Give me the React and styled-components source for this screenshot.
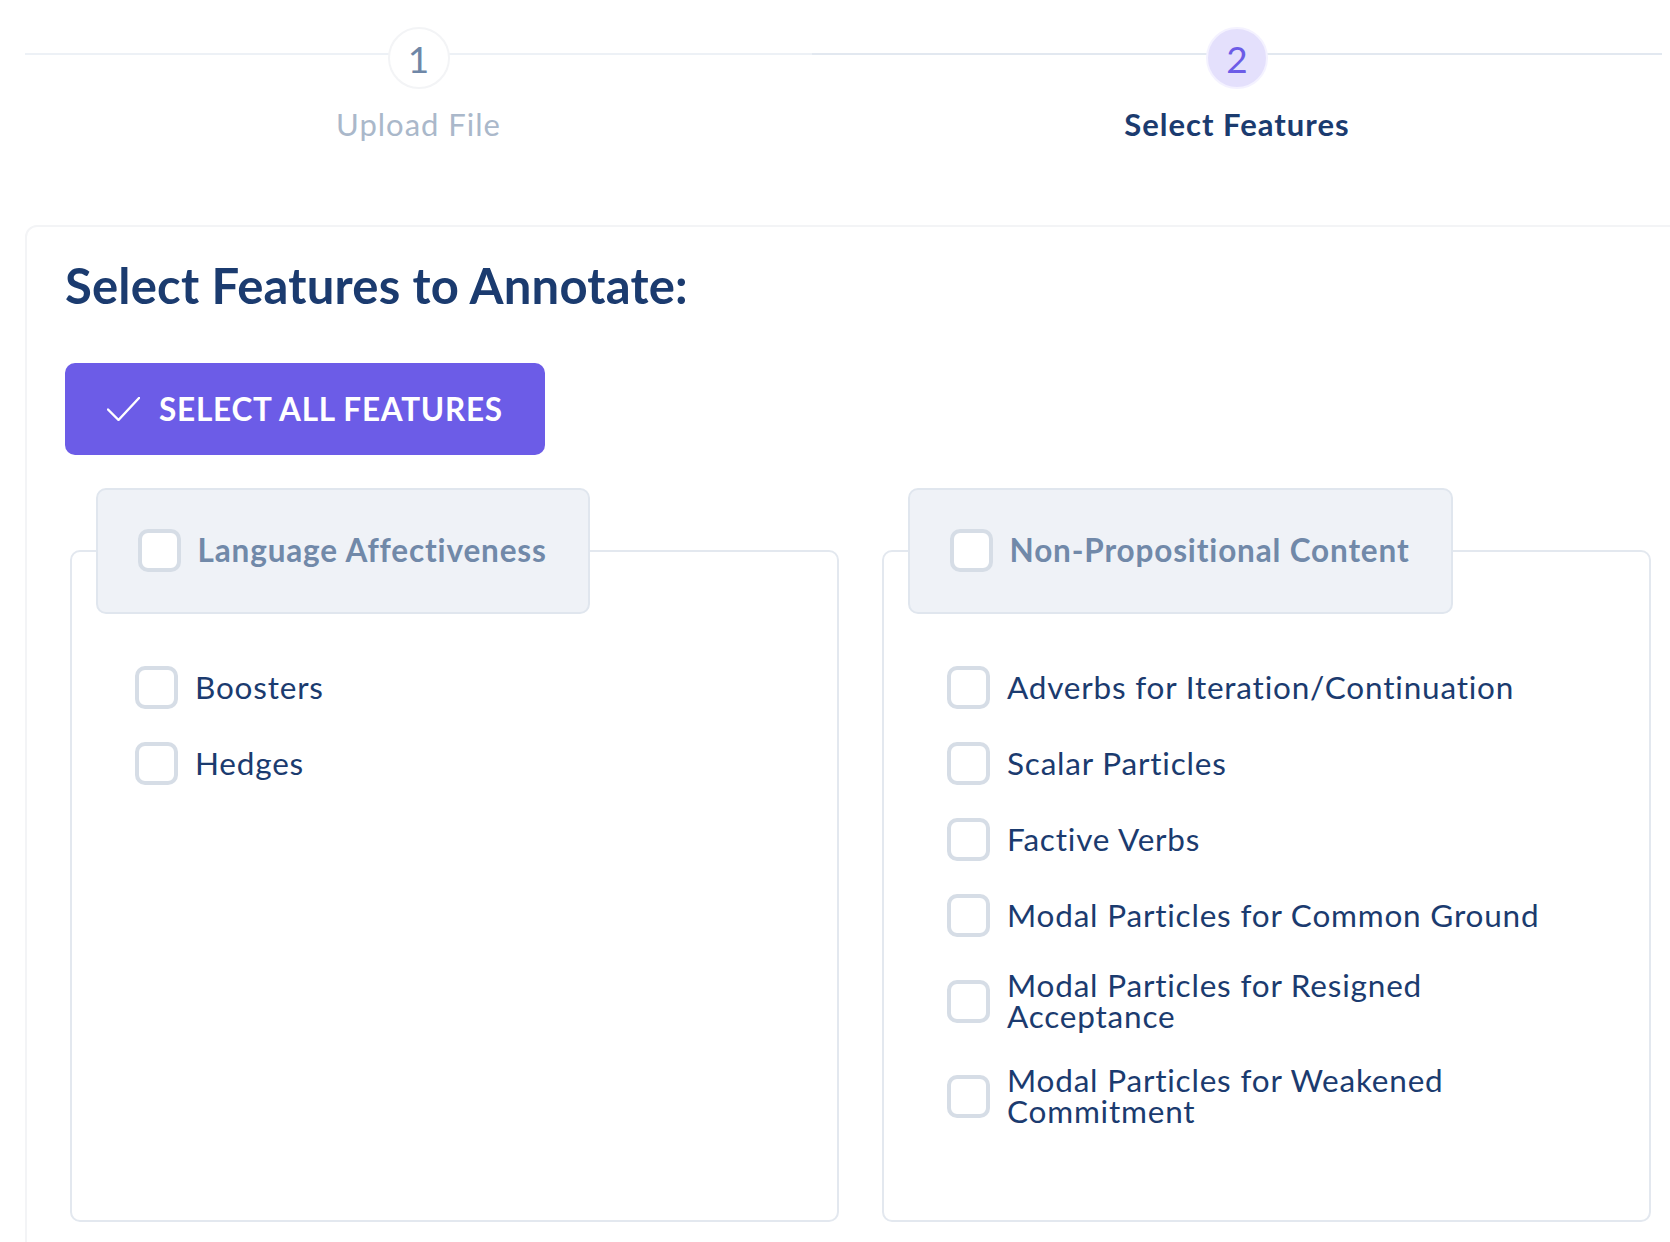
import styled, { createGlobalStyle } from "styled-components";

const GlobalStyle = createGlobalStyle`
  html, body {
    margin: 0;
    padding: 0;
    overflow: hidden;
    background: #ffffff;
  }
  body {
    font-family: Lato, "Noto Sans", sans-serif;
  }
  * {
    box-sizing: border-box;
  }
`;

const Page = styled.div`
  width: 1720px;
  padding-left: 25px;
`;

const Stepper = styled.div`
  display: flex;
`;

const Step = styled.div`
  position: relative;
  flex: 0 0 ${(p) => p.$width}px;
  display: flex;
  flex-direction: column;
  align-items: center;
  padding-top: 27px;

  &::before {
    content: "";
    position: absolute;
    top: 53px;
    left: 0;
    right: 0;
    height: 2px;
    background: ${(p) => p.$line};
  }
`;

const StepCircle = styled.div`
  position: relative;
  z-index: 1;
  width: 62px;
  height: 62px;
  border-radius: 50%;
  display: flex;
  align-items: center;
  justify-content: center;
  font-size: 37px;
  line-height: 1;
  background: ${(p) => (p.$active ? "#e4e0fc" : "#ffffff")};
  border: 2px solid ${(p) => (p.$active ? "#f4f2ff" : "#f3f4f6")};
  color: ${(p) => (p.$active ? "#6c5ce7" : "#6f87a7")};
`;

const StepLabel = styled.div`
  margin-top: 17px;
  font-size: 31px;
  line-height: 1.2;
  letter-spacing: 1px;
  font-weight: ${(p) => (p.$active ? 700 : 400)};
  color: ${(p) => (p.$active ? "#1b3b6f" : "#aab8ca")};
`;

const Card = styled.div`
  margin-top: 82px;
  width: 1671px;
  border: 2px solid #f3f4f6;
  border-radius: 12px;
  padding: 29px 40px 40px 38px;
`;

const Title = styled.h2`
  margin: 0;
  font-size: 49px;
  line-height: 1.2;
  letter-spacing: 0.2px;
  font-weight: 700;
  color: #1b3b6f;
`;

const SelectAllButton = styled.button`
  margin-top: 48px;
  display: flex;
  align-items: center;
  gap: 19px;
  height: 92px;
  padding: 0 42px;
  border: none;
  border-radius: 10px;
  background: #6c5ce7;
  color: #ffffff;
  font-family: inherit;
  font-size: 31.5px;
  letter-spacing: 0.75px;
  font-weight: 700;
  text-transform: uppercase;
  cursor: pointer;

  svg {
    flex-shrink: 0;
  }
`;

const Panels = styled.div`
  margin-top: 33px;
  margin-left: 5px;
  display: grid;
  grid-template-columns: 769px 769px;
  gap: 43px;
`;

const Group = styled.fieldset`
  margin: 0;
  padding: 0;
  min-width: 0;
  border: 2px solid #e3e8ef;
  border-radius: 10px;
`;

const GroupLegend = styled.legend`
  margin-left: 24px;
  padding: 39.5px 41px 39.5px 39.5px;
  background: #eff2f7;
  border: 2px solid #e0e6ee;
  border-radius: 10px;
`;

const LegendInner = styled.div`
  display: flex;
  align-items: center;
  gap: 17px;
  font-size: 31.5px;
  line-height: 1.2;
  letter-spacing: 0.85px;
  font-weight: 700;
  color: #7189a9;
`;

const Box = styled.span`
  flex-shrink: 0;
  width: 43px;
  height: 43px;
  border: 4px solid #d6dde6;
  border-radius: 10px;
  background: #ffffff;
`;

const ItemList = styled.div`
  padding: 36px 64px 76px 63px;
`;

const Item = styled.label`
  display: flex;
  align-items: center;
  gap: 17px;
  padding: 16.5px 0;
  font-size: 31.5px;
  line-height: 31px;
  letter-spacing: 0.8px;
  color: #1b3b6f;
  cursor: pointer;
`;

const groups = [
  {
    name: "Language Affectiveness",
    items: ["Boosters", "Hedges"],
  },
  {
    name: "Non-Propositional Content",
    items: [
      "Adverbs for Iteration/Continuation",
      "Scalar Particles",
      "Factive Verbs",
      "Modal Particles for Common Ground",
      "Modal Particles for Resigned Acceptance",
      "Modal Particles for Weakened Commitment",
    ],
  },
];

const CheckIcon = () => (
  <svg width="33" height="24" viewBox="0 0 33 24" fill="none">
    <polyline
      points="1,12.5 11.5,23 32,1"
      stroke="#ffffff"
      strokeWidth="2.4"
      strokeLinecap="round"
      strokeLinejoin="round"
    />
  </svg>
);

const App = () => {
  return (
    <Page>
      <GlobalStyle />
      <Stepper>
        <Step $width={787} $line="#edf1f6">
          <StepCircle>1</StepCircle>
          <StepLabel>Upload File</StepLabel>
        </Step>
        <Step $width={850} $line="#e2e8f0">
          <StepCircle $active>2</StepCircle>
          <StepLabel $active>Select Features</StepLabel>
        </Step>
      </Stepper>

      <Card>
        <Title>Select Features to Annotate:</Title>
        <SelectAllButton>
          <CheckIcon />
          Select All Features
        </SelectAllButton>

        <Panels>
          {groups.map((group) => (
            <Group key={group.name}>
              <GroupLegend>
                <LegendInner>
                  <Box />
                  {group.name}
                </LegendInner>
              </GroupLegend>
              <ItemList>
                {group.items.map((item) => (
                  <Item key={item}>
                    <Box />
                    <span>{item}</span>
                  </Item>
                ))}
              </ItemList>
            </Group>
          ))}
        </Panels>
      </Card>
    </Page>
  );
};

export default App;
